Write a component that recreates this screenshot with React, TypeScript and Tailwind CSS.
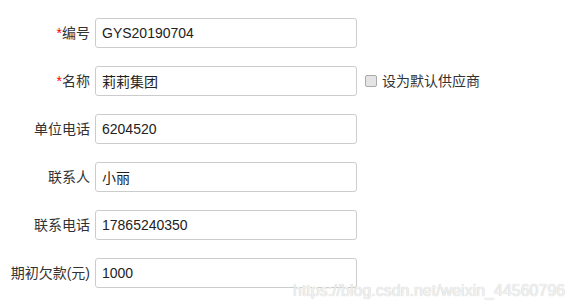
const rows = [
  { label: '编号', required: true, value: 'GYS20190704' },
  { label: '名称', required: true, value: '莉莉集团', extra: true },
  { label: '单位电话', value: '6204520' },
  { label: '联系人', value: '小丽' },
  { label: '联系电话', value: '17865240350' },
  { label: '期初欠款(元)', value: '1000' },
];

const App = () => {
  return (
    <div className="relative w-[574px] h-[306px] bg-white overflow-hidden font-['Liberation_Sans','Noto_Sans_CJK_SC',sans-serif] text-[14px] text-[#333]">
      <div className="flex flex-col gap-[18px] pt-[18px]">
        {rows.map((row) => (
          <div key={row.label} className="flex items-center h-[30px]">
            <label className="w-[90px] text-right whitespace-nowrap">
              {row.required && <span className="text-[#f00]">*</span>}
              {row.label}
            </label>
            <input
              readOnly
              value={row.value}
              className="ml-[5px] w-[262px] h-[30px] px-[6px] border border-[#ccc] rounded-[3px] text-[14px] text-[#222] outline-none"
            />
            {row.extra && (
              <label className="flex items-center ml-[8px]">
                <span className="w-[12px] h-[12px] border border-[#aaa] rounded-[2px] bg-[#e4e4e4]" />
                <span className="ml-[5px] text-[14px]">设为默认供应商</span>
              </label>
            )}
          </div>
        ))}
      </div>
      <span className="absolute left-[293px] top-[279px] text-[16px] text-[#f2f2f2] [text-shadow:0_0_1px_#bbb] whitespace-nowrap">
        https://blog.csdn.net/weixin_44560796
      </span>
    </div>
  );
};

export default App;
